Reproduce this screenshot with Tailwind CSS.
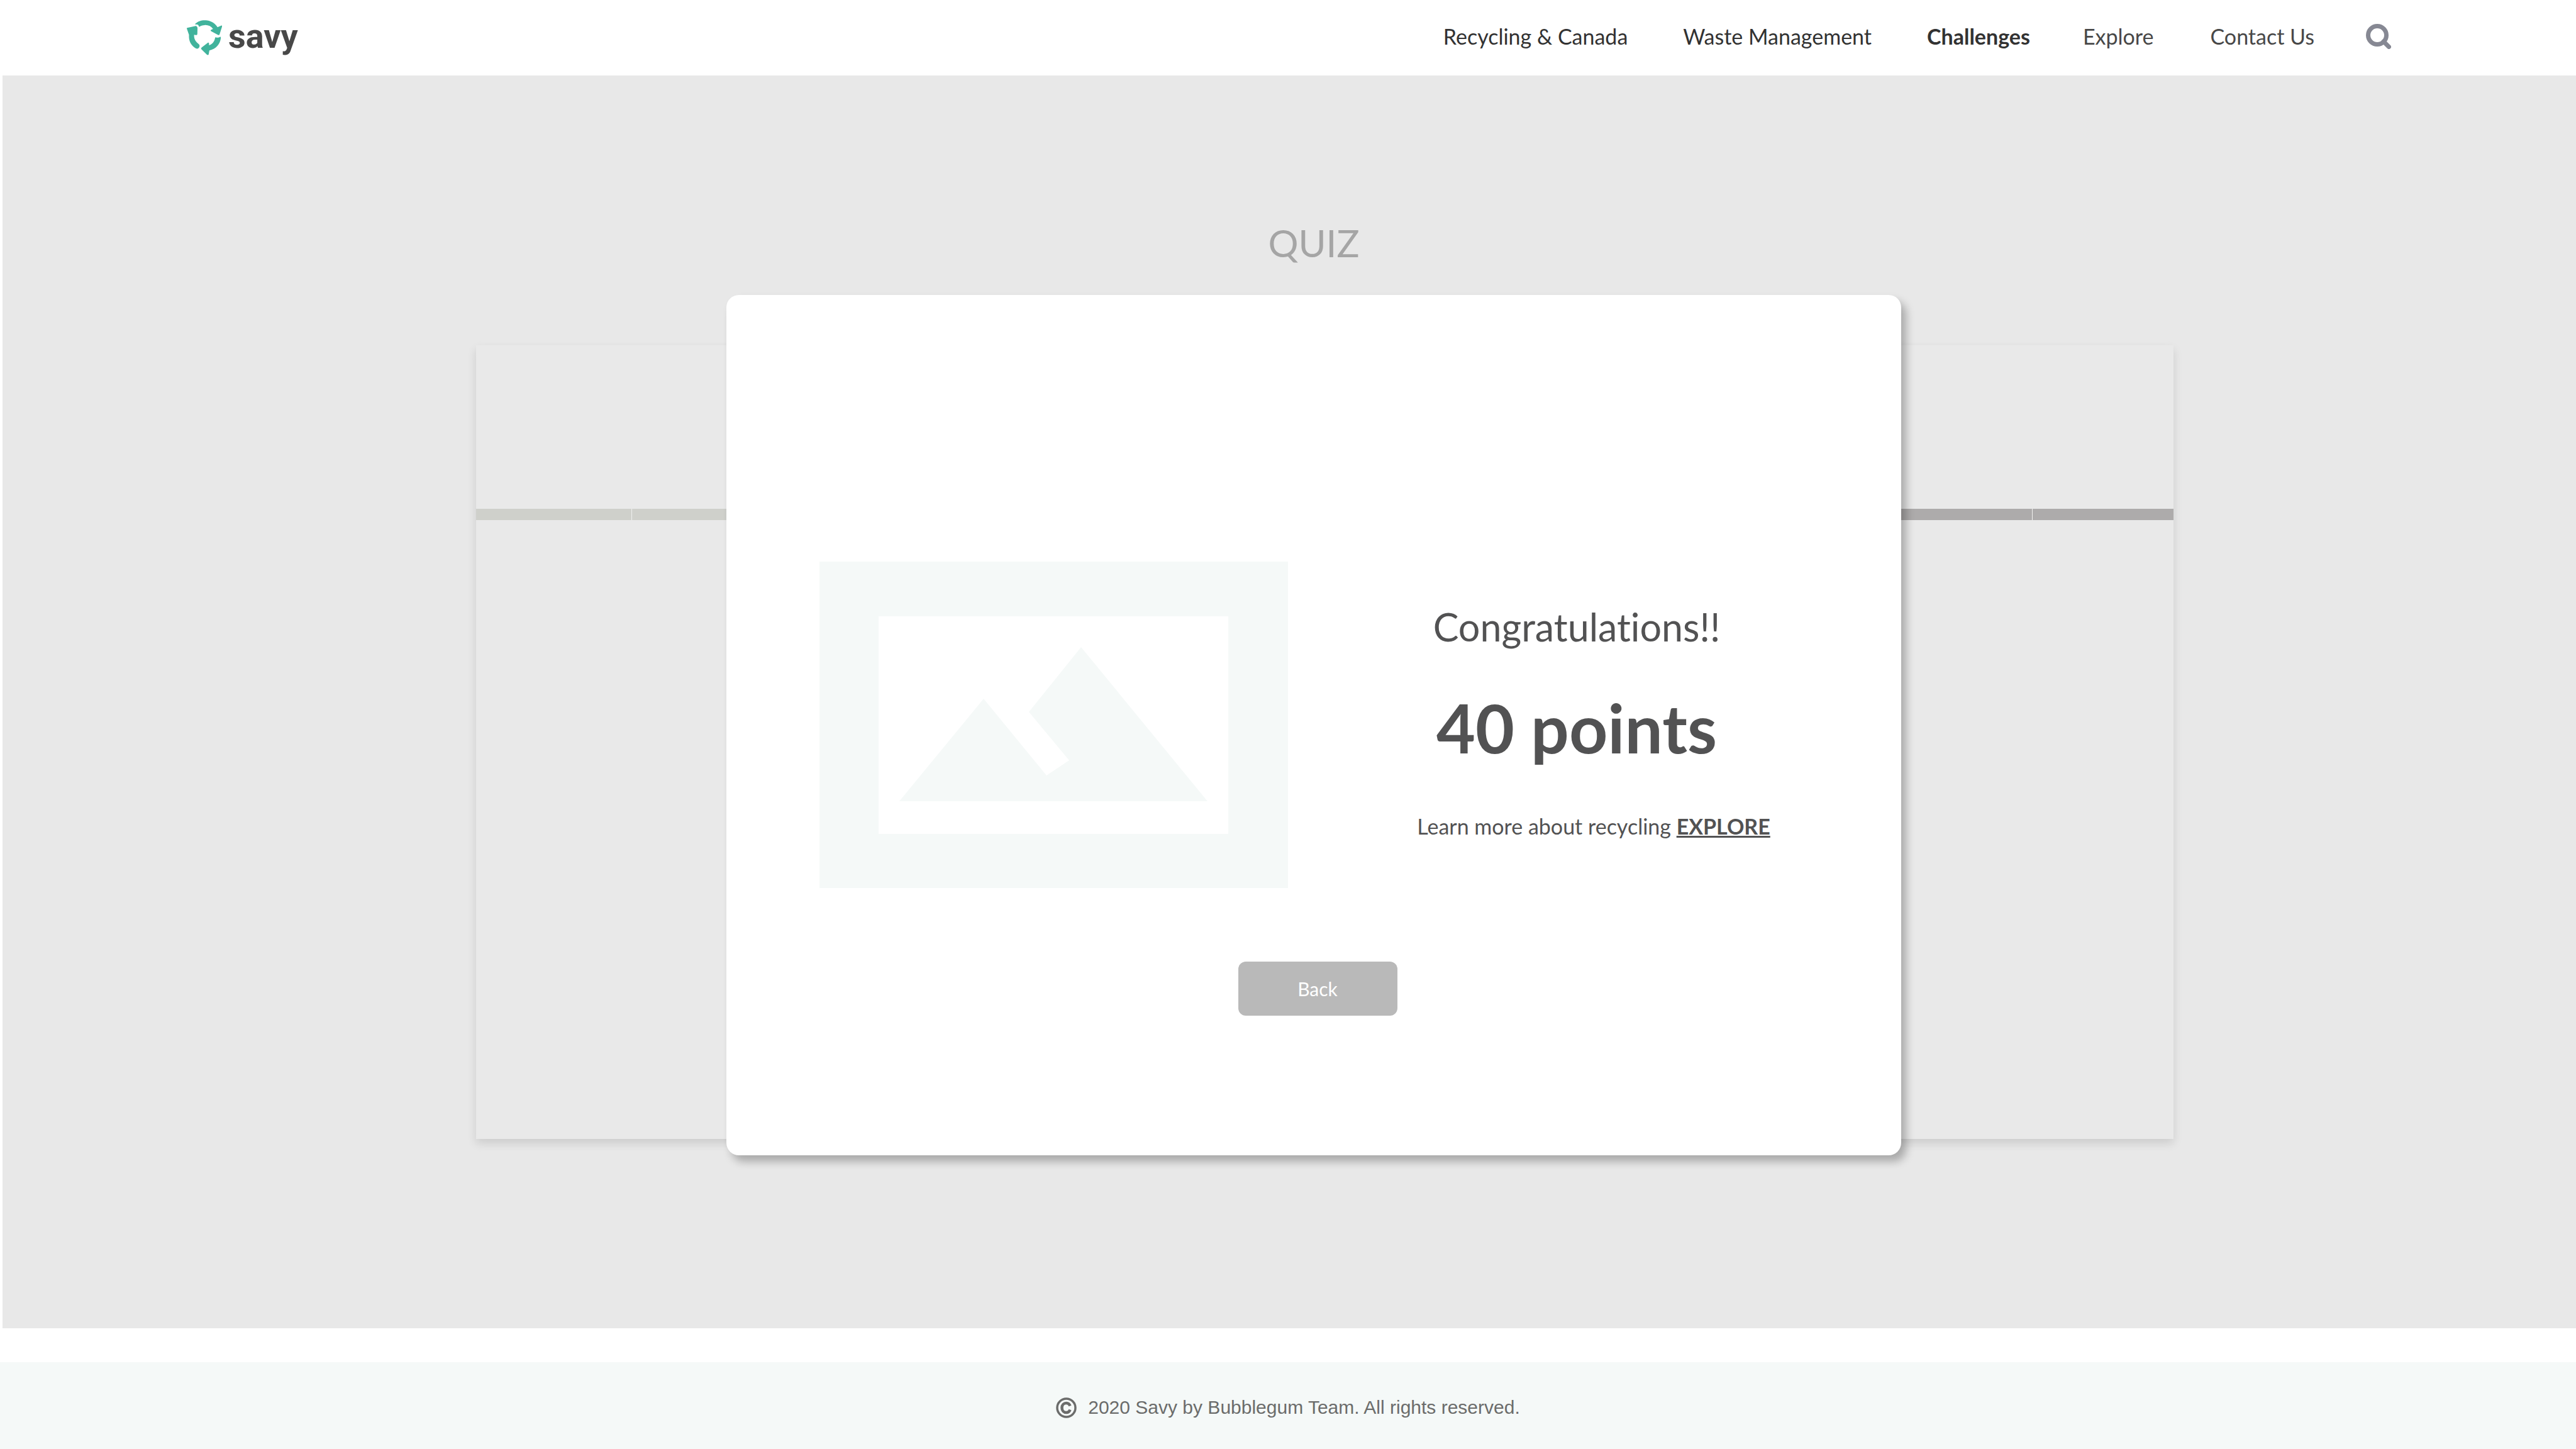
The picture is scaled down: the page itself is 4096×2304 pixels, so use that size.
<!DOCTYPE html>
<html lang="en">
<head>
<meta charset="utf-8">
<meta name="viewport" content="width=device-width, initial-scale=1">
<title>Savy – Quiz</title>
<script src="https://cdn.jsdelivr.net/npm/@tailwindcss/browser@4"></script>
</head>
<body class="flex min-h-screen flex-col bg-white font-['Lato','Open_Sans',sans-serif] [font-variant-ligatures:none]">

<header class="flex h-[120px] items-center justify-between pr-[294px] pl-[297px]">
  <a href="#" class="flex items-center gap-2.5 text-[#484848]">
    <svg class="h-14 w-14" viewBox="0 0 220 218" fill="#41b39c" aria-hidden="true">
      <path d="M50 25C72 2 100-3 128 1C157 6 179 22 192 43L215 33C220 32 222 36 220 40L205 87C204 92 200 93 195 91L153 69C148 66 148 61 153 59L164 54C152 37 134 29 112 30C98 30 88 34 78 41L70 27Z"/>
      <path d="M3 47L52 36C60 34 66 40 67 48L66 84C66 90 62 93 56 92L46 90C43 116 56 134 75 149C81 154 81 162 78 168C74 177 66 179 57 176C24 157 11 126 14 91L1 54C-1 50 0 48 3 47Z"/>
      <path d="M181 106C190 110 201 108 210 102L213 109C208 150 184 178 141 189L137 212C135 218 131 218 126 215L92 182C88 178 89 173 93 170L130 141C135 138 139 141 139 146L139 156C160 149 174 132 177 108Z"/>
    </svg>
    <span class="pb-1 font-['Roboto',sans-serif] text-[54px] leading-[56px] font-bold">savy</span>
  </a>
  <nav class="flex items-center pb-1 text-[34px] leading-10 text-[#323232]" aria-label="Main">
    <a href="#" class="mr-[88px]">Recycling &amp; Canada</a>
    <a href="#" class="mr-[88px]">Waste Management</a>
    <a href="#" class="mr-[84px] font-bold" aria-current="page">Challenges</a>
    <a href="#" class="mr-[90px] text-[#484848]">Explore</a>
    <a href="#" class="mr-[82px] text-[#484848]">Contact Us</a>
    <button type="button" aria-label="Search">
      <svg class="h-10 w-10" viewBox="0 0 40 40" fill="none" stroke="#868893" aria-hidden="true">
        <circle cx="18" cy="18" r="14.5" stroke-width="7"/>
        <path d="M28 28l8.500 8.500" stroke-width="7" stroke-linecap="round"/>
      </svg>
    </button>
  </nav>
</header>

<main class="ml-1 flex flex-col bg-[#e8e8e8] pt-[230px] pb-[275px] pl-[78px]">
  <h1 class="text-center text-[60px] leading-[72px] text-[#a5a5a5]">QUIZ</h1>

  <div class="grid">
    <section class="col-start-1 row-start-1 mt-[127px] mr-[640px] ml-[675px] h-[1262px] self-start bg-[#e9e9e9] pt-[260px] shadow-[0_7px_14px_rgba(0,0,0,0.12)]" aria-label="Quiz progress">
      <div class="flex h-[18px] gap-px bg-[#f0f0ee]">
        <div class="w-[247px] bg-[#cfd0cb]"></div>
        <div class="flex-1 bg-[#cfd0cb]"></div>
        <div class="flex-1 bg-[#adabab]"></div>
        <div class="w-[224px] bg-[#adabab]"></div>
      </div>
    </section>

    <section role="dialog" aria-labelledby="result-title" class="z-10 col-start-1 row-start-1 mt-[47px] flex w-[1868px] flex-col items-center justify-self-center rounded-[20px] bg-white pt-[424px] pb-[222px] shadow-[8px_10px_14px_rgba(0,0,0,0.27)]">
      <div class="flex w-full pr-[170px] pl-[148px]">
        <svg class="h-[519px] w-[745px] shrink-0" viewBox="0 0 745 519" fill="#f5f9f8" role="img" aria-label="Image placeholder">
          <path fill-rule="evenodd" d="M0 0H745V519H0ZM94 87V433H650V87Z"/>
          <path d="M127 381L261 218L361 340L397 316L333 239L416 136L617 381Z"/>
        </svg>
        <div class="flex flex-1 flex-col items-center pt-[68px] pl-[113px] text-[#525253]">
          <h2 id="result-title" class="text-[61px] leading-[72px]">Congratulations!!</h2>
          <p class="mt-[59px] text-[107px] leading-[130px] font-bold">40 points</p>
          <p class="mt-[72px] ml-[54px] text-[34px] leading-10 whitespace-nowrap">Learn more about recycling <a href="#" class="font-bold underline">EXPLORE</a></p>
        </div>
      </div>
      <button type="button" class="mt-[117px] ml-3 h-[86px] w-[253px] rounded-xl bg-[#b9b9b9] text-[30px] leading-9 text-white">Back</button>
    </section>
  </div>
</main>

<footer class="mt-[54px] flex flex-1 items-center justify-center gap-[18px] bg-[#f5f9f8] pt-1.5 font-['Liberation_Sans',Arial,sans-serif] text-[30px] leading-9 text-[#6b6c6b]">
  <svg class="h-[33px] w-[33px]" viewBox="0 0 33 33" fill="none" stroke="#6b6c6b" aria-hidden="true">
    <circle cx="16.500" cy="16.500" r="14.500" stroke-width="3.500"/>
    <path d="M22.500 13.500C21.500 10.500 19.500 9 16.500 9C12.500 9 9.500 12 9.500 16.500C9.500 21 12.500 24 16.500 24C19.500 24 21.500 22.500 22.500 19.500" stroke-width="4.500"/>
  </svg>
  <p>2020 Savy by Bubblegum Team. All rights reserved.</p>
</footer>

</body>
</html>
